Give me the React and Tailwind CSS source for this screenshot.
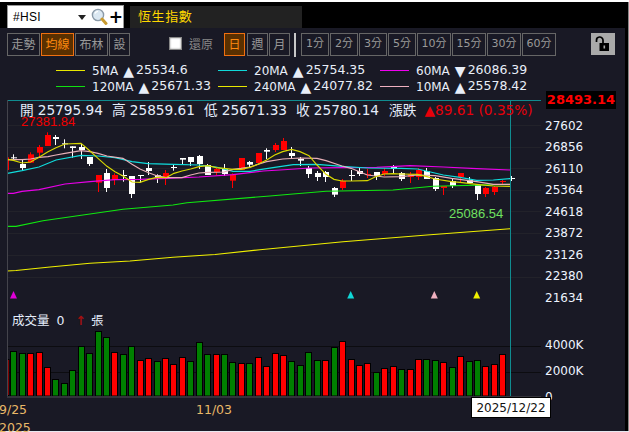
import React from 'react';

const barX = (i) => 13.3 + 8.43 * i;

// volume bars: [colour, top in 3x crop units]
const volumeTops = [
  ['g', 152], ['g', 160], ['r', 160], ['r', 157], ['r', 202], ['g', 238], ['g', 250], ['g', 211], ['g', 139], ['g', 160],
  ['g', 94], ['g', 112], ['r', 157], ['g', 163], ['g', 139], ['r', 181], ['r', 175], ['g', 184], ['r', 175], ['r', 193],
  ['r', 172], ['g', 184], ['g', 127], ['g', 163], ['r', 163], ['g', 163], ['g', 187], ['r', 190], ['g', 190], ['r', 172],
  ['r', 199], ['r', 160], ['r', 166], ['g', 184], ['g', 196], ['g', 157], ['g', 181], ['r', 181], ['g', 142], ['r', 124],
  ['r', 178], ['r', 196], ['r', 190], ['g', 217], ['r', 205], ['r', 199], ['g', 208], ['r', 208], ['r', 178], ['g', 178],
  ['g', 181], ['r', 187], ['g', 202], ['r', 169], ['g', 184], ['g', 181], ['r', 199], ['r', 193], ['r', 163],
];

// candles: [colour, wick top, body top, body bottom, wick bottom], 3x crop units
const candles = [
  ['w', 88, 97, 100, 108], ['w', 105, 117, 129, 136], ['r', 82, 88, 113, 113], ['r', 60, 66, 83, 97], ['r', 22, 30, 63, 63],
  ['w', 30, 36, 42, 60], ['w', 43, 55, 58, 70], ['w', 64, 64, 69, 98], ['w', 57, 66, 75, 102], ['w', 96, 96, 117, 123],
  ['r', 150, 150, 173, 201], ['w', 132, 144, 189, 201], ['r', 145, 150, 165, 180], ['w', 135, 150, 153, 170], ['w', 153, 153, 207, 219],
  ['w', 150, 150, 152, 173], ['w', 111, 129, 138, 150], ['w', 148, 151, 159, 174], ['r', 135, 144, 160, 180], ['w', 118, 126, 129, 137],
  ['w', 99, 99, 104, 120], ['w', 96, 96, 111, 123], ['w', 90, 93, 117, 132], ['w', 117, 120, 150, 150], ['r', 129, 132, 141, 150],
  ['w', 117, 132, 147, 153], ['r', 145, 149, 167, 189], ['r', 99, 99, 135, 135], ['w', 108, 111, 119, 129], ['r', 84, 84, 114, 114],
  ['w', 70, 75, 80, 102], ['r', 54, 60, 75, 81], ['r', 39, 48, 75, 75], ['w', 66, 84, 93, 99], ['w', 96, 102, 107, 123],
  ['w', 123, 129, 147, 159], ['w', 138, 144, 156, 168], ['w', 138, 141, 156, 171], ['w', 186, 189, 209, 216], ['r', 162, 168, 189, 195],
  ['w', 135, 150, 152, 168], ['w', 129, 138, 147, 153], ['r', 132, 147, 148, 159], ['w', 141, 141, 153, 165], ['r', 129, 138, 147, 153],
  ['w', 120, 126, 132, 147], ['w', 141, 144, 162, 168], ['r', 141, 147, 156, 174], ['r', 129, 135, 156, 165], ['w', 129, 138, 162, 162],
  ['w', 156, 159, 192, 198], ['r', 183, 183, 189, 210], ['w', 162, 168, 183, 189], ['r', 144, 144, 156, 171], ['w', 156, 165, 174, 174],
  ['w', 180, 180, 207, 225], ['r', 186, 189, 207, 216], ['r', 183, 186, 201, 210], ['r', 165, 168, 171, 180], ['w', 153, 159, 161, 168],
];

const pts = (left, right) =>
  [...left.map(([x, y]) => `${x / 3},${125 + y / 3}`), ...right.map(([x, y]) => `${260 + x / 3},${125 + y / 3}`)].join(' ');

const maLines = [
  {
    stroke: '#10e810',
    points: '7,226.3 16,226.3 43,220.7 83,215 123,209.3 173,205 187,202.7 270,196 293,194 326,191.3 393,190 433,186.3 510,184.3',
  },
  {
    stroke: '#f0f000',
    points: '7,271 16,270.5 50,267 90,263.3 130,261 173,257.3 215,254.5 260,249.7 343,241.7 427,235 510,228.7',
  },
  {
    stroke: '#e800e8',
    points: pts(
      [[22, 205], [40, 205], [66, 199], [117, 194], [195, 177], [270, 170], [345, 164], [420, 163], [498, 160], [597, 156], [699, 149], [790, 138]],
      [[60, 135], [150, 129], [250, 128], [350, 127], [450, 122], [550, 126], [650, 131], [750, 135]],
    ),
  },
  {
    stroke: '#10dcdc',
    points: pts(
      [[22, 145], [66, 137], [117, 126], [168, 105], [243, 91], [294, 93], [345, 98], [396, 110], [444, 116], [522, 118], [597, 120], [648, 126], [699, 139], [750, 139], [780, 134]],
      [[44, 127], [100, 119], [171, 118], [246, 124], [322, 129], [423, 130], [473, 132], [550, 150], [600, 157], [650, 166], [700, 165], [750, 161]],
    ),
  },
  {
    stroke: '#e8b0b8',
    points: pts(
      [[22, 104], [66, 104], [92, 102], [117, 97], [144, 95], [168, 90], [195, 85], [243, 77], [270, 80], [294, 85], [321, 93], [369, 100], [396, 118], [420, 132], [446, 143], [470, 152], [498, 158], [546, 158], [572, 150], [597, 144], [624, 142], [672, 141], [699, 133], [723, 130], [750, 126], [780, 116]],
      [[20, 110], [68, 102], [120, 99], [171, 100], [198, 107], [246, 123], [273, 130], [322, 150], [372, 156], [423, 155], [473, 150], [525, 152], [575, 160], [650, 170], [700, 178], [750, 178]],
    ),
  },
  {
    stroke: '#d8d800',
    points: pts(
      [[22, 103], [40, 106], [66, 114], [92, 111], [117, 97], [144, 80], [168, 68], [195, 57], [243, 55], [270, 78], [294, 100], [321, 124], [345, 140], [369, 153], [396, 171], [420, 172], [446, 163], [470, 157], [498, 158], [522, 145], [546, 138], [572, 132], [597, 125], [624, 122], [648, 128], [672, 130], [699, 133], [723, 133], [750, 127], [774, 118]],
      [[20, 105], [44, 90], [68, 80], [95, 73], [120, 80], [147, 92], [171, 120], [198, 148], [222, 163], [246, 168], [273, 168], [322, 167], [347, 155], [372, 147], [399, 146], [423, 147], [473, 148], [501, 155], [525, 162], [575, 170], [600, 172], [650, 178], [700, 183], [750, 184]],
    ),
  },
];

const markers = [
  { x: 13.5, fill: '#e000d8' },
  { x: 350.7, fill: '#10d8d8' },
  { x: 434.3, fill: '#f0b0c0' },
  { x: 476.7, fill: '#f0f000' },
];

const legend = [
  [
    { line: 'bg-[#e8e800]', name: '5MA', up: true, value: '25534.6' },
    { line: 'bg-[#10d8d8]', name: '20MA', up: true, value: '25754.35' },
    { line: 'bg-[#f000f0]', name: '60MA', up: false, value: '26086.39' },
  ],
  [
    { line: 'bg-[#10e010]', name: '120MA', up: true, value: '25671.33' },
    { line: 'bg-[#e8e800]', name: '240MA', up: true, value: '24077.82' },
    { line: 'bg-[#f0b0c0]', name: '10MA', up: true, value: '25578.42' },
  ],
];

const priceAxis = ['27602', '26856', '26110', '25364', '24618', '23872', '23126', '22380', '21634'];
const minutes = [
  ['1分', 'w-[28px]'], ['2分', 'w-[28px]'], ['3分', 'w-[28px]'], ['5分', 'w-[28px]'],
  ['10分', 'w-[34px]'], ['15分', 'w-[34px]'], ['30分', 'w-[34px]'], ['60分', 'w-[34px]'],
];

const ToolButton = ({ children, active, className = '' }) => (
  <div
    className={`h-[23px] flex items-center justify-center border ${
      active ? 'border-[#f07010] bg-[#5a3000] text-[#ff8a10]' : 'border-[#666] text-[#999]'
    } ${className}`}
  >
    {children}
  </div>
);

const Magnifier = () => (
  <svg width="17" height="18" viewBox="0 0 17 18">
    <circle cx="7" cy="7" r="5.6" fill="#dbe8f2" stroke="#8a9aa8" strokeWidth="1.4" />
    <path d="M4 5.5 A3.5 3.5 0 0 1 7 3.4" fill="none" stroke="#fff" strokeWidth="1.4" />
    <path d="M11 11 L15 15.5" stroke="#c89a30" strokeWidth="3" strokeLinecap="round" />
  </svg>
);

const OpenLock = () => (
  <svg width="16" height="16" viewBox="0 0 16 16">
    <path d="M1.5 6 V4.5 A3.2 3.2 0 0 1 8 4 V8" fill="none" stroke="#000" strokeWidth="1.7" />
    <rect x="4.5" y="7" width="9.5" height="8" fill="#000" />
    <rect x="8.5" y="9.5" width="1.6" height="3" fill="#aaa" />
  </svg>
);

const Chart = () => (
  <svg width="534" height="298" viewBox="7 100 534 298" className="block">
    {[125, 147, 168, 190, 211, 233, 255, 277].map((y) => (
      <line key={y} x1="7" x2="541" y1={y + 0.5} y2={y + 0.5} stroke="#22222a" strokeWidth="1" />
    ))}
    <line x1="7" x2="541" y1="346.5" y2="346.5" stroke="#0c0c10" />
    <line x1="7" x2="541" y1="372.5" y2="372.5" stroke="#0c0c10" />

    {/* volume */}
    <rect x="5" y="359.5" width="4" height="36" fill="#f00" stroke="#000" />
    {volumeTops.map(([c, top], i) => {
      const y = Math.round(300 + top / 3) + 0.5;
      return (
        <rect
          key={i}
          x={Math.round(barX(i) - 3) + 0.5}
          y={y}
          width="6"
          height={396 - y}
          fill={c === 'g' ? '#008000' : '#ff0000'}
          stroke="#000"
        />
      );
    })}

    {/* candles */}
    <rect x="7" y="157.3" width="2" height="12.7" fill="#f00" />
    {candles.map(([c, wt, bt, bb, wb], i) => {
      const x = Math.round(barX(i));
      const fill = c === 'w' ? '#ffffff' : '#ff0000';
      const bodyH = Math.max(1, (bb - bt) / 3);
      return (
        <g key={i}>
          <rect x={x} y={125 + wt / 3} width="1" height={(wb - wt) / 3} fill={fill} />
          <rect x={x - 2} y={125 + bt / 3} width="6" height={bodyH} fill={fill} />
        </g>
      );
    })}

    {maLines.map((l, i) => (
      <polyline key={i} points={l.points} fill="none" stroke={l.stroke} strokeWidth="1.15" />
    ))}

    {markers.map((m) => (
      <polygon key={m.x} points={`${m.x},291 ${m.x + 3.5},298.5 ${m.x - 3.5},298.5`} fill={m.fill} />
    ))}

    <rect x="7" y="100" width="534" height="1" fill="#108c90" />
    <rect x="510" y="100" width="1" height="296" fill="#108c90" />
    <rect x="7" y="100" width="1" height="296" fill="#44444c" />
    <rect x="541" y="100" width="1" height="298" fill="#44444c" />
    <rect x="7" y="396" width="534" height="2" fill="#33333b" />
  </svg>
);

export default function App() {
  return (
    <div className="relative w-[629px] h-[432px] overflow-hidden flex flex-col bg-white font-['DejaVu_Sans','Noto_Sans_CJK_TC',sans-serif]">
      <div className="h-[2px] bg-white shrink-0" />
      <div className="flex-1 flex min-h-0">
        <div className="w-[625px] flex flex-col bg-[#191925]">
          {/* top bar */}
          <div className="h-[26px] shrink-0 bg-black flex items-end pl-[7px]">
            <div className="w-[117px] h-[23px] bg-white border-t border-x border-[#999] flex items-center pl-[5px] text-black">
              <span className="text-[12px] w-[67px] font-['Liberation_Sans',sans-serif] tracking-[0.3px]">#HSI</span>
              <span className="w-0 h-0 border-x-[4px] border-x-transparent border-t-[5px] border-t-[#222] ml-[1px]" />
              <span className="ml-[5px] flex"><Magnifier /></span>
              <span className="ml-[1px] text-[17px] leading-none font-bold">+</span>
            </div>
            <div className="ml-[6px] w-[172px] h-[22px] bg-[#222222] text-[#ffd800] text-[13px] tracking-[0.6px] pl-[8px] flex items-center">
              恆生指數
            </div>
          </div>

          {/* toolbar */}
          <div className="h-[28px] shrink-0 flex items-start pt-[5px] pl-[7px]">
            <div className="flex gap-[1px] text-[12px]">
              <ToolButton className="w-[33px]">走勢</ToolButton>
              <ToolButton className="w-[33px]" active>均線</ToolButton>
              <ToolButton className="w-[33px]">布林</ToolButton>
              <ToolButton className="w-[21px]">設</ToolButton>
            </div>
            <div className="ml-[39px] mt-[4px] w-[13px] h-[13px] bg-white border border-[#888] shadow-[inset_0_0_2px_#888]" />
            <div className="ml-[7px] h-[23px] flex items-center text-[12px] text-[#888]">還原</div>
            <div className="ml-[11px] flex gap-[1px] text-[12px]">
              <ToolButton className="w-[21px]" active>日</ToolButton>
              <ToolButton className="w-[21px] ml-[1px]">週</ToolButton>
              <ToolButton className="w-[21px]">月</ToolButton>
            </div>
            <div className="ml-[4px] w-[2px] h-[24px] bg-[#c8c8c8]" />
            <div className="ml-[5px] flex gap-[1px] text-[11px]">
              {minutes.map(([label, w]) => (
                <ToolButton key={label} className={w}>{label}</ToolButton>
              ))}
            </div>
            <div className="ml-[35px] w-[24px] h-[22px] bg-[#aaaaaa] flex items-center justify-center">
              <OpenLock />
            </div>
          </div>

          {/* legend */}
          <div className="h-[44px] shrink-0 pt-[7px] flex flex-col gap-[1px]">
            {legend.map((row, r) => (
              <div key={r} className="h-[15px] pl-[56px] flex">
                {row.map((m) => (
                  <div key={m.name} className="w-[162px] flex items-center text-[12px] text-[#e8eef8]">
                    <span className={`w-[29px] h-[1px] ${m.line}`} />
                    <span className="ml-[7px]">{m.name}</span>
                    <span className="ml-[5px] text-[14px] leading-none">{m.up ? '▲' : '▼'}</span>
                    <span className="ml-[2px] text-[12.5px]">{m.value}</span>
                  </div>
                ))}
              </div>
            ))}
          </div>

          {/* chart + axis */}
          <div className="flex-1 flex min-h-0">
            <div className="w-[542px] shrink-0 flex flex-col">
              <div className="relative ml-[7px] h-[298px]">
                <Chart />
                <div className="absolute left-[13px] top-[2px] flex items-center text-[13.7px] leading-[17px] text-[#e4ecfa] whitespace-nowrap">
                  <span>開</span>
                  <span className="ml-[4px]">25795.94</span>
                  <span className="ml-[9px]">高</span>
                  <span className="ml-[4px]">25859.61</span>
                  <span className="ml-[9px]">低</span>
                  <span className="ml-[4px]">25671.33</span>
                  <span className="ml-[9px]">收</span>
                  <span className="ml-[4px]">25780.14</span>
                  <span className="ml-[10px]">漲跌</span>
                  <span className="ml-[8px] text-[#e8000a]">▲89.61 (0.35%)</span>
                </div>
                <div className="absolute left-[14px] top-[14px] font-['Liberation_Sans',sans-serif] text-[13px] leading-[15px] text-[#f00000]">27381.84</div>
                <div className="absolute left-[442px] top-[106px] font-['Liberation_Sans',sans-serif] text-[13px] leading-[15px] text-[#70e060]">25086.54</div>
                <div className="absolute left-[5px] top-[213px] flex items-center text-[12.5px] leading-[16px] text-[#e4ecfa]">
                  <span>成交量</span>
                  <span className="ml-[7px]">0</span>
                  <span className="ml-[11px] text-[#a01010] font-bold">↑</span>
                  <span className="ml-[5px]">張</span>
                </div>
              </div>
              <div className="flex-1 relative text-[12.5px] leading-[18px] text-[#e8b868]">
                <div className="flex">
                  <div className="w-[197px] -ml-[1px] flex flex-col pt-[3px]">
                    <span>9/25</span>
                    <span>2025</span>
                  </div>
                  <div className="pt-[3px]">11/03</div>
                </div>
              </div>
            </div>

            <div className="relative flex-1 pl-[3px] text-[12px] text-[#eef4ff]">
              <div className="absolute left-[4px] -top-[9px] w-[70px] h-[18px] bg-black text-[#ff0000] font-bold text-[13px] flex items-center justify-center">
                28493.14
              </div>
              <div className="pt-[15px]">
                {priceAxis.map((p) => (
                  <div key={p} className="h-[21.5px] flex items-center">{p}</div>
                ))}
              </div>
              <div className="mt-[23px]">
                <div className="h-[26px] flex items-center">4000K</div>
                <div className="h-[26px] flex items-center">2000K</div>
                <div className="h-[26px] flex items-center">0</div>
              </div>
            </div>
          </div>
        </div>
        <div className="w-[3px] bg-black" />
        <div className="w-[1px] bg-[#888]" />
      </div>
      <div className="h-[1px] bg-[#e8e8f0] shrink-0" />

      {/* crosshair date tooltip */}
      <div className="absolute left-[471px] top-[397px] w-[80px] h-[21px] bg-white border border-black text-[12px] text-[#111] flex items-center justify-center">
        2025/12/22
      </div>
    </div>
  );
}
